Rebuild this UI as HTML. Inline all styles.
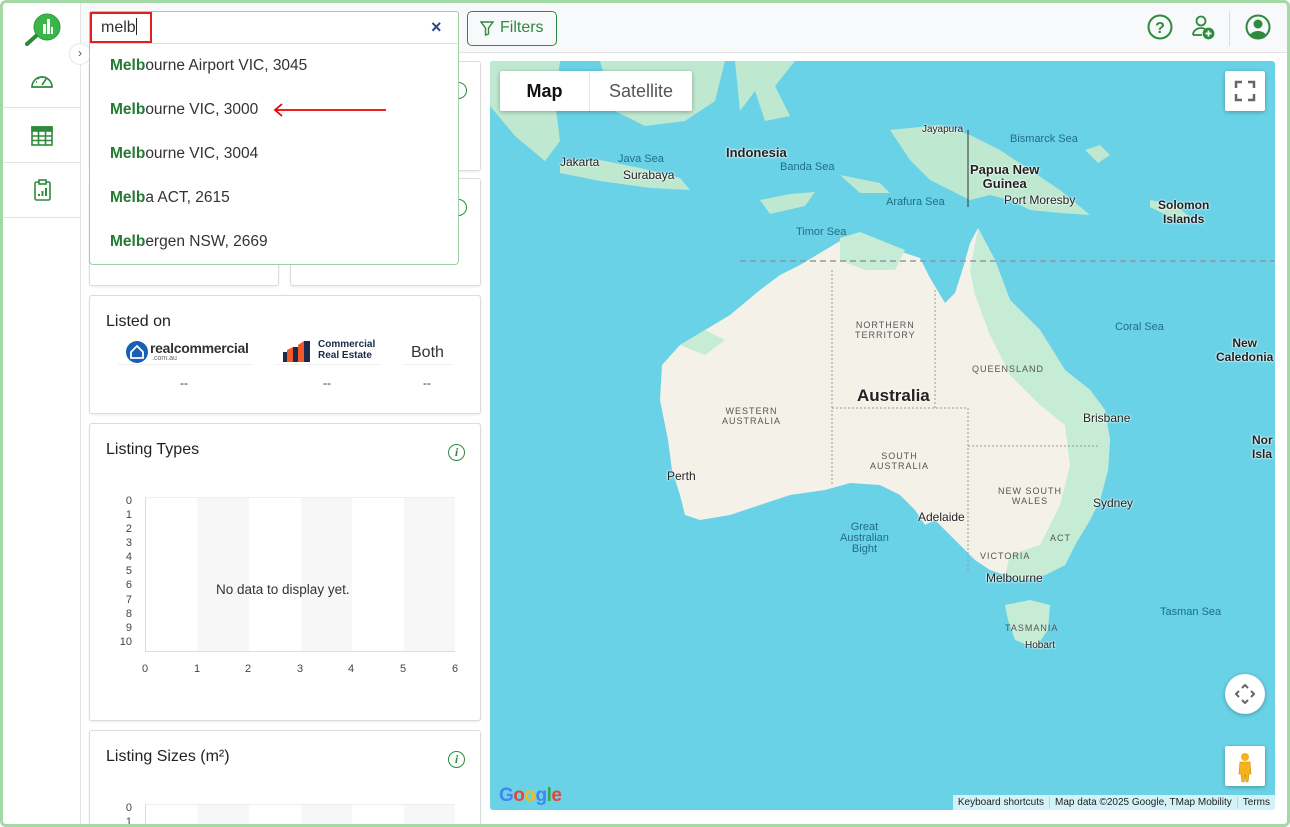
<!DOCTYPE html>
<html><head><meta charset="utf-8"><style>
*{box-sizing:border-box;margin:0;padding:0}
html{width:1290px;height:827px;overflow:hidden}
body{width:1290px;height:827px;overflow:hidden;font-family:"Liberation Sans",sans-serif;background:#fff;position:relative}
.frame{position:absolute;left:0;top:0;width:1290px;height:827px;border:3px solid #a3d9a5;border-radius:6px;pointer-events:none;z-index:50}
.side{position:absolute;left:3px;top:3px;width:78px;bottom:3px;background:#fff;border-right:1px solid #e3e3e3}
.side .it{position:absolute;left:0;width:77px;height:55px;border-bottom:1px solid #e3e3e3}
.top{position:absolute;left:81px;top:3px;right:3px;height:50px;background:#f8f9fa;border-bottom:1px solid #e2e2e2}
.main{position:absolute;left:81px;top:54px;right:3px;bottom:3px;background:#fff}
.card{position:absolute;background:#fff;border:1px solid #dcdcdc;border-radius:3px;box-shadow:0 1px 2px rgba(0,0,0,.08);overflow:hidden}
.card h3{position:absolute;left:16px;font-weight:normal;font-size:16px;color:#222}
.info{position:absolute;width:17px;height:17px;border:1.5px solid #2e8b3e;border-radius:50%;color:#2e8b3e;font:italic bold 12px "Liberation Serif",serif;text-align:center;line-height:14px}
.search{position:absolute;left:89px;top:11px;width:370px;height:33px;border:1px solid #9fcfa5;background:#fff;border-radius:3px 3px 0 0}
.dd{position:absolute;left:89px;top:43px;width:370px;height:222px;background:#fff;border:1px solid #9fcfa5;border-top:1px solid #cfe6d2;border-radius:0 0 4px 4px;z-index:20}
.dd div{position:absolute;left:20px;font-size:15.5px;color:#333}
.dd b{color:#237a32}
.map{position:absolute;left:490px;top:61px;width:785px;height:749px;background:#6ad2e6;overflow:hidden;border-radius:3px}
.ml{position:absolute;font-size:11px;color:#1f6e86;white-space:nowrap}
.cl{position:absolute;font-size:12px;color:#222;white-space:nowrap;text-shadow:0 0 2px #fff,0 0 2px #fff}
.st{position:absolute;font-size:9px;letter-spacing:1px;color:#555;text-align:center;line-height:10px}
.yl{position:absolute;left:28px;width:14px;text-align:right;font-size:11px;color:#444}
.xl{position:absolute;font-size:11px;color:#444}
</style></head><body>
<div class="frame"></div>
<div class="side">
 <svg style="position:absolute;left:20px;top:9px" width="40" height="36" viewBox="0 0 40 36"><circle cx="24" cy="15" r="13" fill="#3bb54a"/><circle cx="24" cy="15" r="13" fill="none" stroke="#2a9a3a" stroke-width="1"/><rect x="20" y="12" width="3" height="10" fill="#fff"/><rect x="24" y="7" width="3" height="15" fill="#fff"/><rect x="28" y="15" width="2" height="7" fill="#fff"/><line x1="13" y1="24" x2="4" y2="32" stroke="#2a8a36" stroke-width="4" stroke-linecap="round"/></svg>
 <div style="position:absolute;left:66px;top:40px;width:22px;height:22px;border-radius:50%;background:#fff;border:1px solid #e5e5e5;font-size:12px;color:#555;text-align:center;line-height:19px;z-index:5">›</div>
 <div class="it" style="top:50px"><svg style="position:absolute;left:27px;top:19px" width="24" height="18" viewBox="0 0 24 18" fill="none" stroke="#2e8b3e" stroke-width="1.7"><path d="M2 15A10 10 0 1 1 22 15Z"/><path d="M12 13L16 7"/><path d="M6 10h1M8 6l1 1M12 4v1M16 5l-1 1"/></svg></div>
 <div class="it" style="top:105px"><svg style="position:absolute;left:28px;top:18px" width="22" height="20" viewBox="0 0 22 20" fill="none" stroke="#2e8b3e" stroke-width="1.6"><rect x="1" y="1" width="20" height="18"/><rect x="1" y="1" width="20" height="4" fill="#2e8b3e"/><path d="M1 10h20M1 14.5h20M7.5 5v14M14.5 5v14"/></svg></div>
 <div class="it" style="top:160px"><svg style="position:absolute;left:31px;top:16px" width="17" height="22" viewBox="0 0 17 22" fill="none" stroke="#2e8b3e" stroke-width="1.6"><rect x="1" y="3" width="15" height="18" rx="1.5"/><rect x="5" y="1" width="7" height="4" fill="#fff"/><path d="M5 17v-2M8.5 17v-5M12 17v-8" stroke-width="2"/></svg></div>
</div>
<div class="top">
 <div style="position:absolute;left:386px;top:8px;width:90px;height:35px;border:1.5px solid #2e8b3e;border-radius:5px;color:#2e8b3e;font-size:16px;line-height:32px;padding-left:32px">Filters
  <svg style="position:absolute;left:12px;top:9px" width="14" height="15" viewBox="0 0 14 15" fill="none" stroke="#2e8b3e" stroke-width="1.4"><path d="M1 1h12L8.5 7v6L5.5 14V7Z"/></svg></div>
 <svg style="position:absolute;left:1066px;top:11px" width="26" height="26" viewBox="0 0 26 26"><circle cx="13" cy="13" r="11.5" fill="none" stroke="#2e8b3e" stroke-width="2"/><text x="13" y="19" text-anchor="middle" font-family="Liberation Sans" font-weight="bold" font-size="16" fill="#2e8b3e">?</text></svg>
 <svg style="position:absolute;left:1110px;top:12px" width="24" height="26" viewBox="0 0 24 26" fill="none" stroke="#2e8b3e" stroke-width="1.8"><circle cx="10" cy="6" r="4.5"/><path d="M2 20a8 7 0 0 1 12-6"/><path d="M2 20h9"/><circle cx="17.5" cy="18.5" r="5" fill="#2e8b3e"/><path d="M17.5 15.5v6M14.5 18.5h6" stroke="#fff"/></svg>
 <div style="position:absolute;left:1148px;top:8px;width:1px;height:35px;background:#ddd"></div>
 <svg style="position:absolute;left:1164px;top:11px" width="26" height="26" viewBox="0 0 26 26"><defs><clipPath id="c"><circle cx="13" cy="13" r="11"/></clipPath></defs><circle cx="13" cy="13" r="11.5" fill="none" stroke="#2e8b3e" stroke-width="2"/><g clip-path="url(#c)" fill="#2e8b3e"><circle cx="13" cy="10" r="4.5"/><ellipse cx="13" cy="24" rx="9" ry="7"/></g></svg>
</div>
<div class="main"></div>

<div class="card" style="left:89px;top:61px;width:392px;height:110px"><div class="info" style="left:360px;top:20px"></div></div>
<div class="card" style="left:89px;top:178px;width:190px;height:108px"></div>
<div class="card" style="left:290px;top:178px;width:191px;height:108px"><div class="info" style="left:159px;top:20px"></div></div>
<div class="card" style="left:89px;top:295px;width:392px;height:119px">
 <h3 style="top:17px">Listed on</h3>
 <svg style="position:absolute;left:35px;top:44px" width="24" height="24"><circle cx="12" cy="12" r="11" fill="#1a5fb4"/><path d="M6 12L12 6l6 6v6H6Z" fill="none" stroke="#fff" stroke-width="1.8"/></svg>
 <div style="position:absolute;left:60px;top:44px;font-size:14px;font-weight:bold;color:#333;letter-spacing:-.3px">realcommercial</div>
 <div style="position:absolute;left:62px;top:59px;font-size:7px;color:#666">.com.au</div>
 <div style="position:absolute;left:28px;top:68px;width:135px;height:1px;background:#eee"></div>
 <svg style="position:absolute;left:193px;top:44px" width="32" height="22"><path d="M0 12h4v10H0Z" fill="#1b2a4a"/><path d="M4 10l6-3v15H4Z" fill="#f05a28"/><path d="M10 7h5v15h-5Z" fill="#1b2a4a"/><path d="M15 5l6-4v21h-6Z" fill="#f05a28"/><path d="M21 1h6v21h-6Z" fill="#1b2a4a"/></svg>
 <div style="position:absolute;left:228px;top:43px;font-size:10px;font-weight:bold;color:#1b2a4a;line-height:11px">Commercial<br>Real Estate</div>
 <div style="position:absolute;left:185px;top:68px;width:106px;height:1px;background:#eee"></div>
 <div style="position:absolute;left:321px;top:48px;font-size:16px;color:#333">Both</div>
 <div style="position:absolute;left:313px;top:68px;width:50px;height:1px;background:#eee"></div>
 <div style="position:absolute;left:90px;top:80px;font-size:12px;color:#333">--</div>
 <div style="position:absolute;left:233px;top:80px;font-size:12px;color:#333">--</div>
 <div style="position:absolute;left:333px;top:80px;font-size:12px;color:#333">--</div>
</div>
<div class="card" style="left:89px;top:423px;width:392px;height:298px">
 <h3 style="top:17px">Listing Types</h3><div class="info" style="left:358px;top:20px">i</div>
 <div style="position:absolute;left:55px;top:73px;width:310px;height:155px;border-left:1px solid #ddd;border-bottom:1px solid #ddd;border-top:1px solid #eee;background:linear-gradient(90deg,#fff 0 51px,#f7f7f7 51px 103px,#fff 103px 155px,#f7f7f7 155px 206px,#fff 206px 258px,#f7f7f7 258px)"></div>
 <div style="position:absolute;left:126px;top:158px;font-size:13.5px;color:#333">No data to display yet.</div>
 <div class="yl" style="top:71px">0</div><div class="yl" style="top:85px">1</div><div class="yl" style="top:99px">2</div><div class="yl" style="top:113px">3</div><div class="yl" style="top:127px">4</div><div class="yl" style="top:141px">5</div><div class="yl" style="top:155px">6</div><div class="yl" style="top:170px">7</div><div class="yl" style="top:184px">8</div><div class="yl" style="top:198px">9</div><div class="yl" style="top:212px">10</div>
 <div class="xl" style="left:52px;top:239px">0</div><div class="xl" style="left:104px;top:239px">1</div><div class="xl" style="left:155px;top:239px">2</div><div class="xl" style="left:207px;top:239px">3</div><div class="xl" style="left:258px;top:239px">4</div><div class="xl" style="left:310px;top:239px">5</div><div class="xl" style="left:362px;top:239px">6</div>
</div>
<div class="card" style="left:89px;top:730px;width:392px;height:94px;border-bottom:none;border-radius:3px 3px 0 0">
 <h3 style="top:17px">Listing Sizes (m²)</h3><div class="info" style="left:358px;top:20px">i</div>
 <div style="position:absolute;left:55px;top:73px;width:310px;height:40px;border-left:1px solid #ddd;border-top:1px solid #eee;background:linear-gradient(90deg,#fff 0 51px,#f7f7f7 51px 103px,#fff 103px 155px,#f7f7f7 155px 206px,#fff 206px 258px,#f7f7f7 258px)"></div>
 <div class="yl" style="top:71px">0</div><div class="yl" style="top:85px">1</div>
</div>

<div class="map">
<svg width="785" height="749" style="position:absolute;left:0;top:0" viewBox="490 61 785 749">
 <g fill="#bfe8d0">
  <path d="M490 61h70l-5 40 5 40-15 20-30-25-25-30Z"/>
  <path d="M560 163l40-3 40 8 40 10 10 12-40-2-50-7-40-8Z"/>
  <path d="M600 61h125l-10 40-30 20-40 5-30-15Z"/>
  <path d="M735 61h60l-20 25 15 30-25 5-10-30-15 20Z"/>
  <path d="M760 200l30-6 25-2-10 14-35 8Z"/>
  <path d="M890 130l50-5 30 10 30 15 30 20 30 20 30 25-30-2-30-3-20-10-20-5-20 5-20-10-20-10-20-20Z"/>
  <path d="M1085 150l15-5 10 10-12 8Z"/><path d="M1150 200l25 5 15 12-20 0-20-10Z"/>
  <path d="M840 175l40 8 10 10-30 0Z"/>
 </g>
 <path fill="#f4f1e9" d="M978 228l17 32 15 40 30 30 25 40 25 20 15 20 5 30-2 30-8 30-10 20-15 25-10 20-20 10-25 5-15-5-15-5-15-10-15-15-15-15-10-10-10 5-10-15-15-15-20-10-30-2-25 7-35 5-30 10-30 10-30 5-15-5-5-20-8-25-4-30-8-40 2-35 18-20 25-15 25-15 30-25 20-15 20-10 20-12 20-12 20-6 20 8 25 10 15 5 10 20 15 25 10-10 8-25 7-25Z"/>
 <g fill="#c6ecd6">
  <path d="M978 228l17 32 15 40 30 30 25 40 25 20 15 20 5 30-2 30-8 30-10 20-15 25-10 20-20 10-25 5-15-5 5-20 30-10 20-40 10-40-5-40-25-20-30-30-20-40-15-40-5-25Z"/>
  <path d="M840 238l20-6 20 8 25 10-10 20-30 0-25-10Z"/>
  <path d="M680 345l25-15 20 10-20 15Z"/>
  <path d="M1005 605l25-5 20 5-2 25-13 18-20-8-7-20Z"/>
 </g>
 <g fill="none" stroke="#999" stroke-dasharray="2 2" stroke-width="1">
  <path d="M832 270V485M832 408H968M935 290V408M968 408V570M968 446H1100"/>
 </g>
 <path d="M740 261H1275" stroke="#8a9aa6" stroke-dasharray="6 4" stroke-width="1.5" fill="none"/>
 <path d="M968 130V207" stroke="#333" stroke-width="1"/>
</svg>
<div class="ml" style="left:128px;top:92px">Java Sea</div>
<div class="ml" style="left:290px;top:100px">Banda Sea</div>
<div class="ml" style="left:396px;top:135px">Arafura Sea</div>
<div class="ml" style="left:306px;top:165px">Timor Sea</div>
<div class="ml" style="left:520px;top:72px">Bismarck Sea</div>
<div class="ml" style="left:625px;top:260px">Coral Sea</div>
<div class="ml" style="left:670px;top:545px">Tasman Sea</div>
<div class="ml" style="left:350px;top:461px;text-align:center;line-height:11px">Great<br>Australian<br>Bight</div>
<div class="cl" style="left:70px;top:94px">Jakarta</div>
<div class="cl" style="left:133px;top:107px">Surabaya</div>
<div class="cl" style="left:236px;top:84px;font-weight:bold;font-size:13px">Indonesia</div>
<div class="cl" style="left:432px;top:63px;font-size:10px">Jayapura</div>
<div class="cl" style="left:480px;top:102px;font-weight:bold;font-size:13px;text-align:center;line-height:14px">Papua New<br>Guinea</div>
<div class="cl" style="left:514px;top:132px">Port Moresby</div>
<div class="cl" style="left:668px;top:137px;font-weight:bold;text-align:center;line-height:14px">Solomon<br>Islands</div>
<div class="cl" style="left:726px;top:275px;font-weight:bold;text-align:center;line-height:14px">New<br>Caledonia</div>
<div class="cl" style="left:762px;top:372px;font-weight:bold;line-height:14px">Nor<br>Isla</div>
<div class="cl" style="left:367px;top:325px;font-weight:bold;font-size:17px">Australia</div>
<div class="cl" style="left:177px;top:408px">Perth</div>
<div class="cl" style="left:428px;top:449px">Adelaide</div>
<div class="cl" style="left:496px;top:510px">Melbourne</div>
<div class="cl" style="left:603px;top:435px">Sydney</div>
<div class="cl" style="left:593px;top:350px">Brisbane</div>
<div class="cl" style="left:535px;top:579px;font-size:10px">Hobart</div>
<div class="st" style="left:365px;top:259px">NORTHERN<br>TERRITORY</div>
<div class="st" style="left:482px;top:303px">QUEENSLAND</div>
<div class="st" style="left:232px;top:345px">WESTERN<br>AUSTRALIA</div>
<div class="st" style="left:380px;top:390px">SOUTH<br>AUSTRALIA</div>
<div class="st" style="left:508px;top:425px">NEW SOUTH<br>WALES</div>
<div class="st" style="left:490px;top:490px">VICTORIA</div>
<div class="st" style="left:560px;top:472px">ACT</div>
<div class="st" style="left:515px;top:562px">TASMANIA</div>
<div style="position:absolute;left:10px;top:10px;width:192px;height:40px;background:#fff;border-radius:2px;box-shadow:0 1px 4px rgba(0,0,0,.3)">
 <div style="position:absolute;left:0;width:90px;height:40px;border-right:1px solid #e6e6e6;font-size:18px;font-weight:bold;color:#111;text-align:center;line-height:40px">Map</div>
 <div style="position:absolute;left:90px;width:102px;height:40px;font-size:18px;color:#555;text-align:center;line-height:40px">Satellite</div>
</div>
<div style="position:absolute;left:735px;top:10px;width:40px;height:40px;background:#fff;border-radius:2px;box-shadow:0 1px 4px rgba(0,0,0,.3)"><svg width="40" height="40" fill="none" stroke="#666" stroke-width="2.5"><path d="M11 17v-6h6M23 11h6v6M29 23v6h-6M17 29h-6v-6"/></svg></div>
<div style="position:absolute;left:735px;top:613px;width:40px;height:40px;background:#fff;border-radius:50%;box-shadow:0 1px 4px rgba(0,0,0,.3)"><svg width="40" height="40" fill="none" stroke="#666" stroke-width="2"><path d="M17 14l3-3 3 3M17 26l3 3 3-3M14 17l-3 3 3 3M26 17l3 3-3 3"/></svg></div>
<div style="position:absolute;left:735px;top:685px;width:40px;height:40px;background:#fff;border-radius:2px;box-shadow:0 1px 4px rgba(0,0,0,.3)"><svg width="40" height="40"><circle cx="20" cy="11" r="4" fill="#f6b21b"/><path d="M15 16h10l1 12h-2l-1 8h-2l-1-8-1 8h-2l-1-8h-2Z" fill="#f6b21b" stroke="#c78a10" stroke-width=".6"/></svg></div>
<div style="position:absolute;left:9px;top:724px;font-size:19px;font-weight:bold;letter-spacing:-.5px"><span style="color:#4285f4">G</span><span style="color:#ea4335">o</span><span style="color:#fbbc05">o</span><span style="color:#4285f4">g</span><span style="color:#34a853">l</span><span style="color:#ea4335">e</span></div>
<div style="position:absolute;right:0;top:734px;height:15px;background:rgba(255,255,255,.7);font-size:10px;color:#222;line-height:15px;white-space:nowrap">
 <span style="padding:0 5px;border-right:1px solid #ccc">Keyboard shortcuts</span><span style="padding:0 5px;border-right:1px solid #ccc">Map data ©2025 Google, TMap Mobility</span><span style="padding:0 5px">Terms</span></div>
</div>

<div class="search">
 <div style="position:absolute;left:0;top:0;width:62px;height:31px;border:2px solid #e02020"></div>
 <div style="position:absolute;left:11px;top:6px;font-size:16px;color:#333">melb<span style="display:inline-block;width:1px;height:17px;background:#222;vertical-align:-3px"></span></div>
 <div style="position:absolute;left:341px;top:5px;font-size:18px;font-weight:bold;color:#2c4a8a">×</div>
</div>
<div class="dd">
 <div style="top:13px"><b>Melb</b>ourne Airport VIC, 3045</div>
 <div style="top:57px"><b>Melb</b>ourne VIC, 3000</div>
 <div style="top:101px"><b>Melb</b>ourne VIC, 3004</div>
 <div style="top:145px"><b>Melb</b>a ACT, 2615</div>
 <div style="top:189px"><b>Melb</b>ergen NSW, 2669</div>
 <svg style="position:absolute;left:182px;top:58px" width="116" height="16"><path d="M3 8H114M10 2L3 8l7 6" fill="none" stroke="#e00" stroke-width="1.8"/></svg>
</div>
</body></html>
